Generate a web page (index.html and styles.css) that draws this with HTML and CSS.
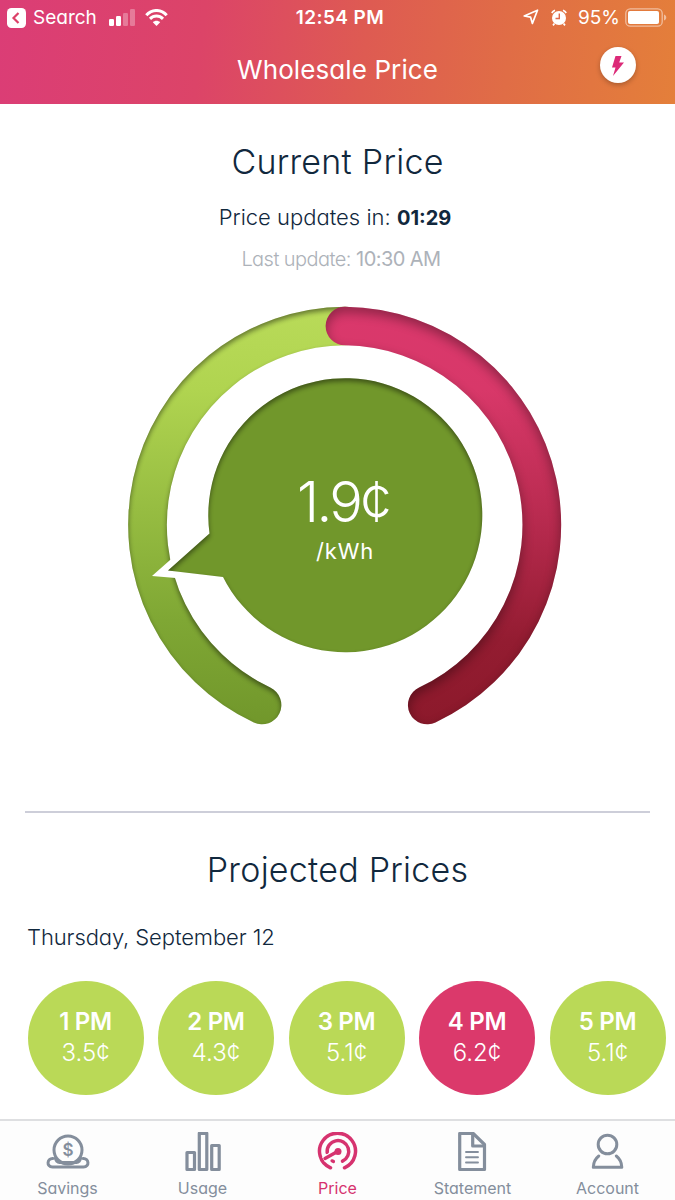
FILE: index.html
```html
<!DOCTYPE html>
<html lang="en">

<head>
    <meta charset="UTF-8">
    <meta name="viewport" content="width=device-width, initial-scale=1.0">
    <title>Wholesale Price</title>
    <link rel="stylesheet" href="styles.css">
</head>

<body>

    <header class="header">
        <div class="status-bar">
            <div class="status-left">
                <svg width="19" height="20" viewBox="0 0 19 20">
                    <rect width="19" height="20" rx="4.5" fill="#fff"/>
                    <path d="M11.5 5L6.500 10l5 5" fill="none" stroke="#dc4068" stroke-width="2.2"/>
                </svg>
                <span class="back-label">Search</span>
                <svg class="signal" width="27" height="17" viewBox="0 0 27 17" fill="#fff">
                    <rect x="0" y="10" width="5" height="7" rx="1.2"/>
                    <rect x="7" y="7" width="5" height="10" rx="1.2"/>
                    <rect x="14" y="4" width="5" height="13" rx="1.2" opacity=".3"/>
                    <rect x="21" y="0" width="5" height="17" rx="1.2" opacity=".3"/>
                </svg>
                <svg class="wifi" width="23" height="17" viewBox="0 0 23 17" fill="none" stroke="#fff" stroke-width="3">
                    <path d="M1.3 6.2C7-.1 16-.1 21.7 6.2"/>
                    <path d="M5 9.900c3.800-3.800 9.200-3.800 13 0"/>
                    <path d="M7.800 13.200c2.200-2 5.200-2 7.400 0L11.500 17z" fill="#fff" stroke="none"/>
                </svg>
            </div>
            <span class="clock">12:54 PM</span>
            <div class="status-right">
                <svg width="16" height="16" viewBox="0 0 16 16" fill="none" stroke="#fff" stroke-width="1.7" stroke-linejoin="round">
                    <path d="M14.500 1.200L9.400 14.400 7.600 8.200 1.200 7z"/>
                </svg>
                <svg class="alarm" width="16" height="17" viewBox="0 0 16 17">
                    <circle cx="8" cy="9" r="7" fill="#fff"/>
                    <path d="M.8 4A6 6 0 0 1 4 1.200M15.200 4A6 6 0 0 0 12 1.200M3.500 14.500L2 16.400M12.500 14.500L14 16.400" stroke="#fff" stroke-width="1.700" fill="none"/>
                    <path d="M8.300 4.500v5H4.500" fill="none" stroke="#df6a4c" stroke-width="1.400"/>
                </svg>
                <span class="battery-label">95%</span>
                <svg width="42" height="19" viewBox="0 0 42 19">
                    <rect x=".8" y=".8" width="36.400" height="17.400" rx="4.500" fill="none" stroke="#fff" stroke-opacity=".5" stroke-width="1.300"/>
                    <rect x="3" y="3" width="31" height="13" rx="2" fill="#fff"/>
                    <path d="M39 6.500c3 1 3 5 0 6z" fill="#fff" opacity=".5"/>
                </svg>
            </div>
        </div>
        <div class="nav">
            <h1 class="title">Wholesale Price</h1>
            <button class="bolt">
                <svg width="14" height="20" viewBox="0 0 14 20">
                    <path d="M4.500 0h6L8.200 6.500H13L2 20l2.500-8.500H1z" fill="#dc2a78"/>
                </svg>
            </button>
        </div>
    </header>

    <main class="main">
        <h2 class="heading current">Current Price</h2>
        <p class="countdown">Price updates in: <b>01:29</b></p>
        <p class="last-update">Last update: <b>10:30 AM</b></p>

        <svg class="gauge" width="460" height="440" viewBox="115 295 460 440">
            <defs>
                <linearGradient id="green" gradientUnits="userSpaceOnUse" x1="0" y1="306" x2="0" y2="725">
                    <stop offset="0" stop-color="#b9db59"/>
                    <stop offset=".2" stop-color="#b0d450"/>
                    <stop offset=".75" stop-color="#7fa734"/>
                    <stop offset="1" stop-color="#71972b"/>
                </linearGradient>
                <linearGradient id="red" gradientUnits="userSpaceOnUse" x1="0" y1="306" x2="0" y2="725">
                    <stop offset="0" stop-color="#da386c"/>
                    <stop offset=".2" stop-color="#d83869"/>
                    <stop offset=".5" stop-color="#b92b50"/>
                    <stop offset=".8" stop-color="#931c31"/>
                    <stop offset="1" stop-color="#8c192b"/>
                </linearGradient>
                <!-- inner shadows, light coming from below -->
                <filter id="inset" filterUnits="userSpaceOnUse" x="115" y="295" width="460" height="440" color-interpolation-filters="sRGB">
                    <feComponentTransfer in="SourceAlpha" result="inverse">
                        <feFuncA type="linear" slope="-1" intercept="1"/>
                    </feComponentTransfer>
                    <feGaussianBlur in="inverse" stdDeviation="2.5"/>
                    <feOffset dy="2.5"/>
                    <feComponentTransfer>
                        <feFuncA type="linear" slope=".45"/>
                    </feComponentTransfer>
                    <feComposite in2="SourceAlpha" operator="in" result="shade"/>
                    <feMerge>
                        <feMergeNode in="SourceGraphic"/>
                        <feMergeNode in="shade"/>
                    </feMerge>
                </filter>
                <filter id="inset-deep" filterUnits="userSpaceOnUse" x="115" y="295" width="460" height="440" color-interpolation-filters="sRGB">
                    <feComponentTransfer in="SourceAlpha" result="inverse">
                        <feFuncA type="linear" slope="-1" intercept="1"/>
                    </feComponentTransfer>
                    <feGaussianBlur in="inverse" stdDeviation="6"/>
                    <feOffset dy="5"/>
                    <feComponentTransfer>
                        <feFuncA type="linear" slope=".36"/>
                    </feComponentTransfer>
                    <feComposite in2="SourceAlpha" operator="in" result="shade"/>
                    <feMerge>
                        <feMergeNode in="SourceGraphic"/>
                        <feMergeNode in="shade"/>
                    </feMerge>
                </filter>
            </defs>
            <g filter="url(#inset)">
                <path d="M262 705A198.900 198.900 0 0 1 345 326" fill="none" stroke="url(#green)" stroke-width="38.700" stroke-linecap="round"/>
            </g>
            <g filter="url(#inset-deep)">
                <path d="M345 326A198.900 198.900 0 0 1 427.300 705" fill="none" stroke="url(#red)" stroke-width="38.700" stroke-linecap="round"/>
            </g>
            <path d="M152 576L200 533.500 215 560 223 582z" fill="#fff"/>
            <g filter="url(#inset)" fill="#71972b">
                <path d="M168 570.500L209.500 533.500A137 137 0 1 1 223 577z"/>
            </g>
            <text class="gauge-value" x="343" y="522">1.9¢</text>
            <text class="gauge-unit" x="345" y="559">/kWh</text>
        </svg>

        <div class="divider"></div>

        <h2 class="heading projected">Projected Prices</h2>
        <p class="date">Thursday, September 12</p>

        <div class="hours">
            <div class="hour"><b>1 PM</b><span>3.5¢</span></div>
            <div class="hour"><b>2 PM</b><span>4.3¢</span></div>
            <div class="hour"><b>3 PM</b><span>5.1¢</span></div>
            <div class="hour high"><b>4 PM</b><span>6.2¢</span></div>
            <div class="hour"><b>5 PM</b><span>5.1¢</span></div>
        </div>
    </main>

    <nav class="tabs">
        <a class="tab">
            <svg width="44" height="44" viewBox="0 0 44 44" fill="none" stroke="currentColor" stroke-width="3">
                <circle cx="22" cy="18" r="14"/>
                <path d="M7 26.500C1 26 0 35 6.500 35h31c6.500 0 5.500-9-.5-8.500M9.500 26c0 2.500 2 4.500 4 4.500h17c2 0 4-2 4-4.500" stroke-linecap="round"/>
                <text class="dollar" x="22" y="24">$</text>
            </svg>
            <span>Savings</span>
        </a>
        <a class="tab">
            <svg width="44" height="44" viewBox="0 0 44 44" fill="none" stroke="currentColor" stroke-width="3.200" stroke-linejoin="round">
                <rect x="6" y="20.500" width="7.500" height="17"/>
                <rect x="18.300" y="1.300" width="7.500" height="36.200"/>
                <rect x="30.700" y="13.500" width="7.500" height="24"/>
            </svg>
            <span>Usage</span>
        </a>
        <a class="tab active">
            <svg width="44" height="44" viewBox="0 0 44 44" fill="none" stroke="currentColor" stroke-width="3.500" stroke-linecap="round">
                <path d="M14.500 35.800A18 18 0 1 1 28.500 35.800"/>
                <path d="M11.200 20.500A10.800 10.800 0 1 1 26.500 29.200"/>
                <path d="M16 28.800l1.500 .7" stroke-width="3.200"/>
                <path d="M7.500 27.500L20 20.500" stroke="#fdfdfd" stroke-width="6" stroke-linecap="butt"/>
                <path d="M9 26.500L21.500 19.500"/>
                <circle cx="22" cy="19.500" r="3.500" fill="currentColor" stroke="none"/>
            </svg>
            <span>Price</span>
        </a>
        <a class="tab">
            <svg width="44" height="44" viewBox="0 0 44 44" fill="none" stroke="currentColor" stroke-width="3.200" stroke-linejoin="round">
                <path d="M8.700 1.500h13.500L33.500 12.500V37.500H8.700z"/>
                <path d="M21.700 1.500v12.500H33.500"/>
                <path d="M15 20h12M15 25.200h12M15 30.500h12" stroke-width="1.900" stroke-linecap="round"/>
            </svg>
            <span>Statement</span>
        </a>
        <a class="tab">
            <svg width="44" height="44" viewBox="0 0 44 44" fill="none" stroke="currentColor" stroke-width="3" stroke-linejoin="round" stroke-linecap="round">
                <circle cx="21.500" cy="12.500" r="9.300"/>
                <path d="M12.800 24C9.500 26.500 7.500 30.500 7.300 35.300h28.500c-.2-4.800-2.200-8.800-5.500-11.300"/>
            </svg>
            <span>Account</span>
        </a>
    </nav>

</body>

</html>
```
FILE: styles.css
```css
body {
    margin: 0;
    width: 675px;
    height: 1200px;
    display: flex;
    flex-direction: column;
    overflow: hidden;
    background-color: white;
    color: #11283d;
    font-family: Inter, "Liberation Sans", sans-serif;
    font-feature-settings: "cv11";
}

h1,
h2,
p {
    margin: 0;
    font-weight: 300;
}

/* Header */
.header {
    height: 104px;
    box-sizing: border-box;
    color: white;
    background: linear-gradient(97deg, #db3d76 0%, #dc4468 30%, #de5b52 54%, #e06d46 75%, #e47f3a 100%);
}

.status-bar {
    display: grid;
    grid-template-columns: 1fr auto 1fr;
    align-items: center;
    height: 34px;
    padding: 0 8px 0 7px;
    font-size: 19px;
    line-height: 34px;
}

.status-left,
.status-right {
    display: flex;
    align-items: center;
}

.status-right {
    justify-content: flex-end;
}

.status-right svg {
    margin-bottom: 2px;
}

.back-label {
    margin-left: 7px;
    font-weight: 400;
    line-height: 36px;
}

.signal {
    margin: 0 0 1px 12px;
}

.wifi {
    margin: 0 0 1px 9px;
}

.clock {
    padding-left: 6px;
    font-weight: 600;
    letter-spacing: 0.4px;
    line-height: 36px;
}

.status-right .alarm {
    margin: 0 11px 2px 12px;
}

.battery-label {
    margin-right: 5px;
    line-height: 36px;
}

.nav {
    display: grid;
    grid-template-columns: 1fr auto 1fr;
    height: 70px;
}

.title {
    grid-column: 2;
    font-size: 26px;
    line-height: 71px;
    font-weight: 400;
    letter-spacing: 0.1px;
}

.bolt {
    display: flex;
    align-items: center;
    justify-content: center;
    justify-self: end;
    width: 36px;
    height: 36px;
    margin: 13px 39px 0 0;
    padding: 2px 0 0;
    border: none;
    border-radius: 50%;
    background-color: white;
    box-shadow: 0 2px 5px rgba(0, 0, 0, 0.25);
}

/* Current price */
.main {
    flex: 1;
    display: flex;
    flex-direction: column;
}

.heading {
    font-size: 34px;
    line-height: 40px;
    text-align: center;
    letter-spacing: 0.25px;
}

.current {
    margin-top: 38px;
}

.countdown {
    margin: 22px 0 0 -5px;
    font-size: 22px;
    line-height: 26px;
    text-align: center;
}

.countdown b {
    font-size: 20px;
    font-weight: 700;
}

.last-update {
    margin: 16px 0 0 7px;
    font-size: 20px;
    line-height: 24px;
    text-align: center;
    letter-spacing: -0.55px;
    color: #adb2b9;
}

.last-update b {
    font-weight: 400;
}

.gauge {
    flex: none;
    margin: 24px 0 0 115px;
}

.gauge-value,
.gauge-unit {
    fill: white;
    text-anchor: middle;
}

.gauge-value {
    font-size: 56px;
    font-weight: 300;
    letter-spacing: -2.6px;
}

.gauge-unit {
    font-size: 22px;
    letter-spacing: 0.8px;
}

.divider {
    height: 2px;
    margin: 76px 25px 0;
    background-color: #cdced9;
}

/* Projected prices */
.projected {
    margin-top: 37px;
}

.date {
    margin: 34px 0 0 27px;
    font-size: 22px;
    line-height: 26px;
    letter-spacing: -0.1px;
}

.hours {
    display: flex;
    gap: 14.5px;
    margin: 31px 0 0 27.5px;
}

.hour {
    display: flex;
    flex: none;
    flex-direction: column;
    align-items: center;
    box-sizing: border-box;
    width: 116px;
    height: 114px;
    padding-top: 25px;
    border-radius: 50%;
    background-color: #bad957;
    color: white;
    font-size: 24px;
    line-height: 31px;
}

.hour b {
    font-weight: 600;
    letter-spacing: -0.3px;
}

.hour span {
    font-weight: 300;
}

.hour.high {
    background-color: #db396b;
}

/* Bottom tabs */
.tabs {
    display: grid;
    grid-template-columns: repeat(5, 1fr);
    height: 81px;
    box-sizing: border-box;
    border-top: 2px solid #dedfe1;
    background-color: #fdfdfd;
}

.tab {
    display: flex;
    flex-direction: column;
    align-items: center;
    padding-top: 11px;
    color: #848e9c;
    font-size: 16px;
    line-height: 24px;
}

.dollar {
    fill: currentColor;
    stroke: none;
    font-size: 17px;
    font-weight: 600;
    text-anchor: middle;
}

.tab.active {
    color: #d6336f;
}
```
